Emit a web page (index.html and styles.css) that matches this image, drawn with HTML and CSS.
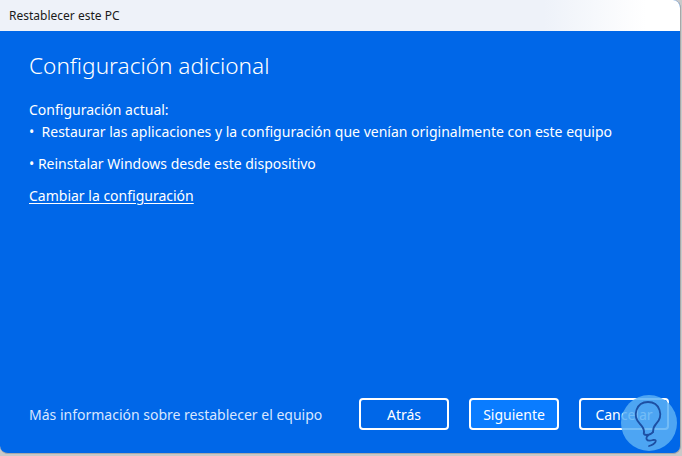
FILE: index.html
```html
<!DOCTYPE html>
<html lang="es">
<head>
<meta charset="utf-8">
<title>Restablecer este PC</title>
<link rel="stylesheet" href="styles.css">
</head>
<body>
<div class="window">
  <div class="titlebar">Restablecer este PC</div>
  <div class="content">
    <h1 class="heading">Configuración adicional</h1>
    <p class="label">Configuración actual:</p>
    <p class="item item-first">•&nbsp; Restaurar las aplicaciones y la configuración que venían originalmente con este equipo</p>
    <p class="item">• Reinstalar Windows desde este dispositivo</p>
    <a class="link" href="#">Cambiar la configuración</a>
    <div class="spacer"></div>
    <div class="footer">
      <span class="more">Más información sobre restablecer el equipo</span>
      <div class="buttons">
        <button class="btn">Atrás</button>
        <button class="btn btn-primary">Siguiente</button>
        <button class="btn">Cancelar</button>
      </div>
    </div>
  </div>
  <svg class="watermark" width="58" height="58" viewBox="0 0 58 58">
    <circle cx="29" cy="29" r="28" fill="#5ab0f5" fill-opacity="0.85"/>
    <path d="M20 30 C12 22 16 8 28 8 C40 8 44 22 36 30 C33 33 33 36 33 38 M24 38 C24 35 23 33 20 30" fill="none" stroke="#1d4fa3" stroke-width="1.8" stroke-linecap="round"/>
    <path d="M24 38 C22 42 30 42 33 38 M30 40 C24 44 26 48 33 46 C38 45 36 50 29 52" fill="none" stroke="#1d4fa3" stroke-width="1.8" stroke-linecap="round"/>
  </svg>
</div>
</body>
</html>
```
FILE: styles.css
```css
html, body {
  margin: 0;
  padding: 0;
}
body {
  width: 682px;
  height: 456px;
  background: #c9c9c9;
  font-family: "Segoe UI", "Noto Sans", "Open Sans", sans-serif;
  overflow: hidden;
}
.window {
  position: relative;
  width: 680px;
  height: 453px;
  border-radius: 0 8px 8px 8px;
  background: #0067e8;
  overflow: hidden;
  display: flex;
  flex-direction: column;
  border-right: 1px solid #a8a8a8;
  border-bottom: 1px solid #a8a8a8;
}
.titlebar {
  height: 31px;
  flex: none;
  background: linear-gradient(90deg, #eef2f9 0%, #eef2f9 80%, #ffffff 95%);
  color: #1a1a1a;
  font-size: 12px;
  line-height: 31px;
  padding-left: 9px;
}
.content {
  flex: 1;
  display: flex;
  flex-direction: column;
  padding: 0 0 0 29px;
  color: #ffffff;
}
.heading {
  margin: 20px 0 0 0;
  font-size: 22.6px;
  font-weight: 300;
  line-height: 30px;
  letter-spacing: 0;
}
.label {
  margin: 19px 0 0 0;
  font-size: 14px;
  line-height: 20px;
}
.item {
  margin: 2px 0 0 0;
  font-size: 14px;
  line-height: 20px;
}
.item + .item {
  margin-top: 12px;
}
.link {
  margin-top: 12px;
  font-size: 14px;
  line-height: 20px;
  color: #ffffff;
  text-decoration: underline;
  text-underline-offset: 2px;
  align-self: flex-start;
}
.spacer {
  flex: 1;
}
.footer {
  display: flex;
  align-items: center;
  justify-content: space-between;
  padding-right: 11px;
  margin-bottom: 23px;
}
.more {
  font-size: 14px;
  color: #d8e6ff;
}
.buttons {
  display: flex;
  gap: 20px;
}
.btn {
  width: 90px;
  height: 32px;
  border: 2px solid #ffffff;
  border-radius: 4px;
  background: transparent;
  color: #ffffff;
  font-family: inherit;
  font-size: 14px;
  padding: 0;
}
.btn-primary {
  background: #0a7cff;
}
.watermark {
  position: absolute;
  right: 2px;
  bottom: 1px;
}
```
